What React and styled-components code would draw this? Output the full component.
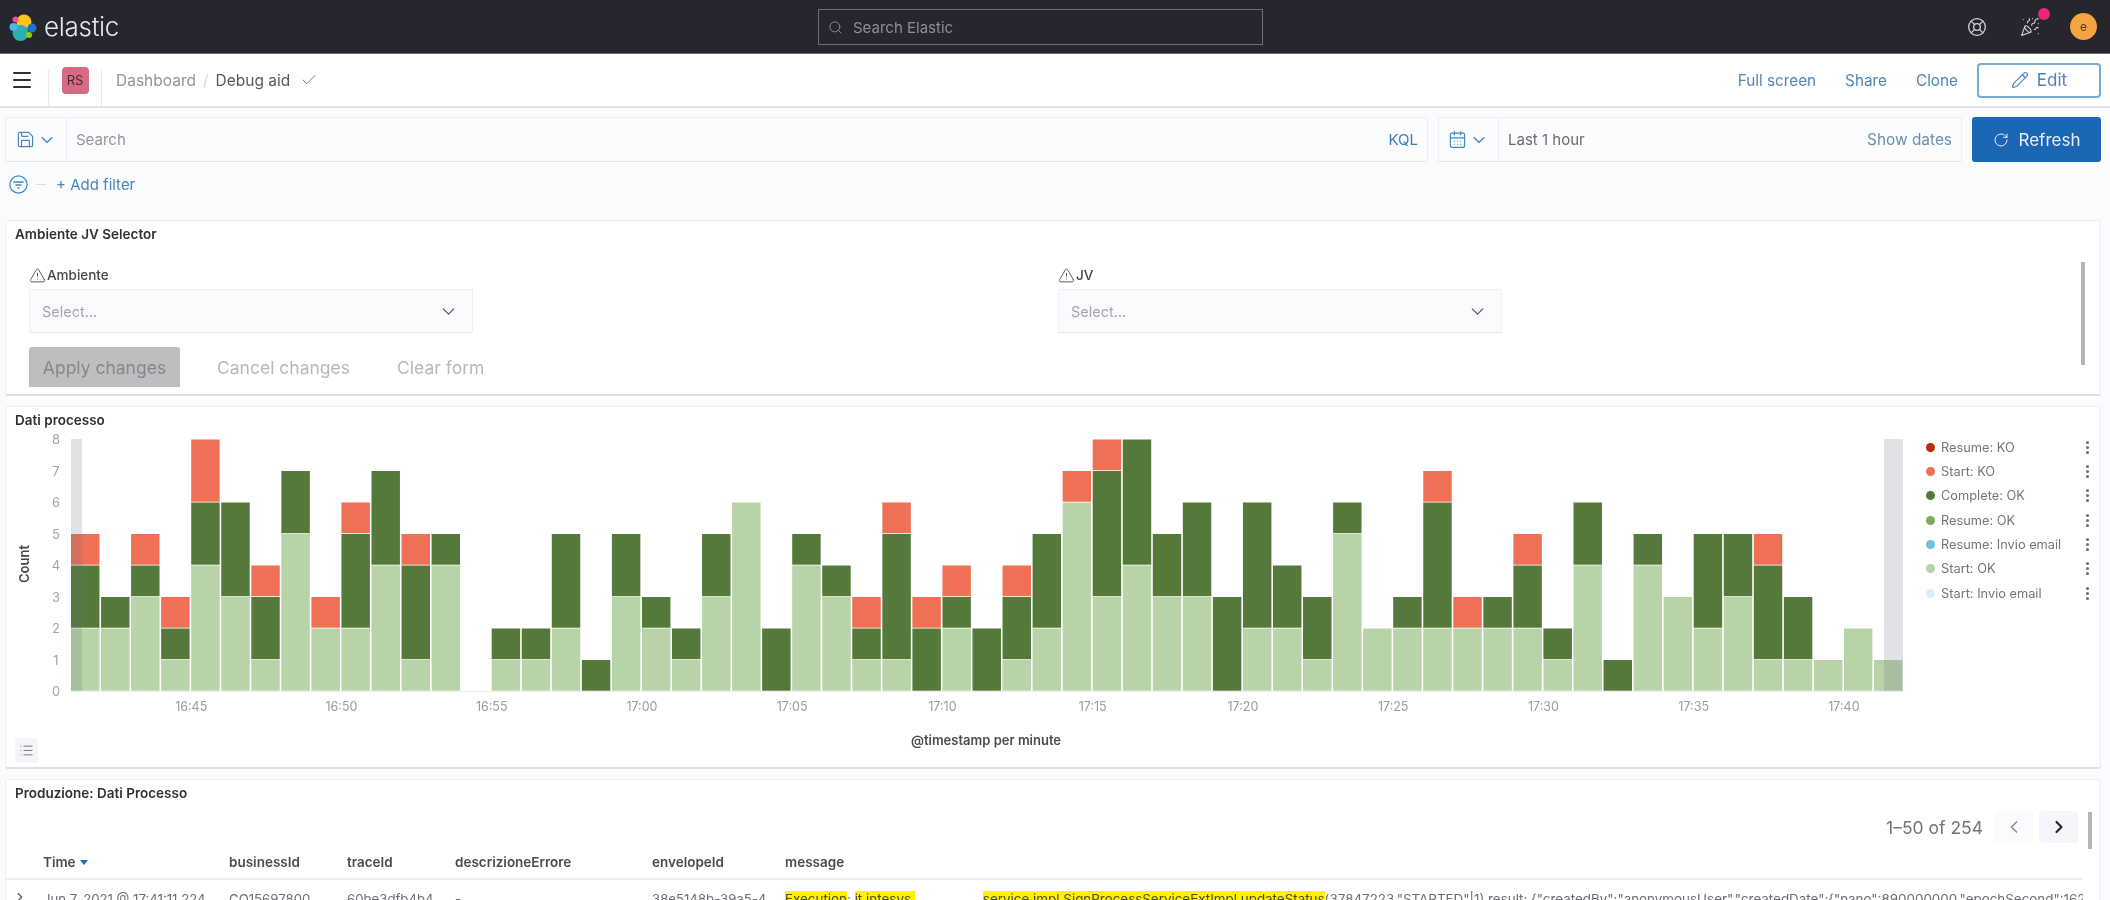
import React from 'react';
import styled, { createGlobalStyle } from 'styled-components';
import {
    Search, Menu, Check, Pencil, RotateCw, Save, CalendarDays, ChevronDown, ChevronLeft,
    ChevronRight, LifeBuoy, PartyPopper, TriangleAlert, List, EllipsisVertical
} from 'lucide-react';

const GlobalStyle = createGlobalStyle`
    html, body {
        margin: 0;
        padding: 0;
        background: #fafbfd;
    }

    * {
        box-sizing: border-box;
    }

    body {
        font-family: Inter, "Liberation Sans", sans-serif;
        color: #343741;
    }
`;

const Page = styled.div`
    width: 2110px;
    height: 900px;
    overflow: hidden;
    background: #fafbfd;
    filter: blur(0.6px);
`;

const TopBar = styled.header`
    height: 54px;
    background: #25262e;
    border-bottom: 1px solid #6b6c72;
    display: flex;
    align-items: center;
    position: relative;
    padding-left: 9px;
`;

const LogoText = styled.span`
    font-size: 26px;
    font-weight: 300;
    color: #e6e7ea;
    margin-left: 7px;
    margin-top: -1px;
    letter-spacing: -0.3px;
`;

const GlobalSearch = styled.div`
    position: absolute;
    left: 818px;
    top: 9px;
    width: 445px;
    height: 36px;
    border: 1px solid #6d6e74;
    display: flex;
    align-items: center;
    gap: 10px;
    padding-left: 9px;
    font-size: 15px;
    color: #8e8f95;
    background: #25262e;
`;

const TopIcons = styled.div`
    margin-left: auto;
    display: flex;
    align-items: center;
    padding-right: 13px;
    color: #cfd0d4;
`;

const IconSlot = styled.span`
    position: relative;
    display: flex;
    margin-right: ${props => props.gap}px;
`;

const Dot = styled.span`
    position: absolute;
    right: -10px;
    top: -9px;
    width: 12px;
    height: 12px;
    border-radius: 50%;
    background: #e8277b;
`;

const Avatar = styled.span`
    width: 27px;
    height: 27px;
    border-radius: 50%;
    background: #f5a442;
    color: #4f3c20;
    font-size: 12px;
    display: flex;
    align-items: center;
    justify-content: center;
`;

const SubNav = styled.nav`
    height: 54px;
    background: #fff;
    border-bottom: 2px solid #dfe2eb;
    display: flex;
    align-items: stretch;
    font-size: 16px;
`;

const NavCell = styled.div`
    width: ${props => props.width}px;
    display: flex;
    align-items: center;
    justify-content: center;
    padding-right: ${props => props.inset || 0}px;
    border-right: 1px solid #e6e8ee;
    margin-top: 16px;
    & > * {
        margin-top: -16px;
    }
`;

const SpaceBadge = styled.span`
    width: 27px;
    height: 27px;
    border-radius: 4px;
    background: #d56c84;
    color: #4a2a33;
    font-size: 13px;
    display: flex;
    align-items: center;
    justify-content: center;
`;

const Crumbs = styled.div`
    display: flex;
    align-items: center;
    padding-left: 14px;
    color: #909399;
    font-size: 15.5px;
`;

const CrumbSep = styled.span`
    margin: 0 7px;
    color: #d5d7dc;
`;

const CrumbCurrent = styled.span`
    color: #55585f;
    margin-right: 10px;
`;

const NavActions = styled.div`
    margin-left: auto;
    display: flex;
    align-items: center;
    gap: 29px;
    padding-right: 9px;
    color: #4c86b8;
    font-size: 15.3px;
`;

const EditButton = styled.span`
    width: 124px;
    height: 35px;
    margin-left: -10px;
    border: 2px solid #7aa9cf;
    border-radius: 4px;
    display: flex;
    align-items: center;
    justify-content: center;
    gap: 8px;
    font-size: 17px;
    color: #4c86b8;
    background: #fff;
`;

const QueryRow = styled.div`
    display: flex;
    margin: 9px 9px 0 5px;
    height: 45px;
    gap: 10px;
`;

const InputBox = styled.div`
    width: ${props => props.width}px;
    display: flex;
    align-items: stretch;
    background: #fbfcfe;
    border: 1px solid #eceef4;
    border-bottom-color: #e2e5ed;
    border-radius: 2px;
    font-size: 15px;
`;

const Prepend = styled.div`
    width: ${props => props.width}px;
    display: flex;
    align-items: center;
    justify-content: center;
    gap: 2px;
    color: #4388bf;
    border-right: 1px solid #eceef4;
`;

const InputText = styled.div`
    flex: 1;
    display: flex;
    align-items: center;
    justify-content: space-between;
    padding: 0 9px;
    color: ${props => props.dark ? '#6a6b70' : '#93969c'};
`;

const InputLink = styled.span`
    color: ${props => props.muted ? '#6f8fae' : '#3d80b8'};
    font-size: ${props => props.muted ? 15.4 : 15}px;
`;

const RefreshButton = styled.div`
    flex: 1;
    background: #1b67b6;
    border-radius: 3px;
    color: #e6eef7;
    font-size: 17px;
    display: flex;
    align-items: center;
    justify-content: center;
    gap: 10px;
`;

const FilterRow = styled.div`
    height: 44px;
    display: flex;
    align-items: center;
    padding-left: 9px;
    color: #4c86b8;
    font-size: 15px;
`;

const FilterDash = styled.span`
    width: 10px;
    height: 1px;
    background: #d9dbe0;
    margin: 0 10px 0 8px;
`;

const Panels = styled.main`
    margin: 14px 9px 0 5px;
    display: flex;
    flex-direction: column;
    gap: 10px;
`;

const Panel = styled.section`
    position: relative;
    height: ${props => props.height}px;
    background: #fff;
    border: 1px solid #eceef5;
    border-bottom: 2px solid #dcdfe9;
    border-radius: 3px;
`;

const PanelTitle = styled.h3`
    margin: 0;
    padding: 3px 0 0 9px;
    font-size: 13.5px;
    line-height: 20px;
    font-weight: 600;
    color: #2f3139;
`;

const ControlsGrid = styled.div`
    display: grid;
    grid-template-columns: 1029px 444px;
    margin: 20px 0 0 23px;
`;

const ControlLabel = styled.label`
    display: flex;
    align-items: center;
    gap: 1px;
    height: 22px;
    font-size: 13.5px;
    font-weight: 500;
    color: #45474e;
`;

const SelectBox = styled.div`
    width: 444px;
    height: 44px;
    margin-top: 3px;
    background: #fbfbfe;
    border: 1px solid #eef0f5;
    border-bottom-color: #e3e5ed;
    border-radius: 2px;
    padding: 0 13px 0 12px;
    display: flex;
    align-items: center;
    justify-content: space-between;
    font-size: 14.5px;
    color: #a3a5aa;
`;

const FormActions = styled.div`
    display: flex;
    align-items: center;
    margin: 14px 0 0 23px;
    font-size: 17.5px;
    color: #b7b8bc;
`;

const ApplyButton = styled.span`
    width: 151px;
    height: 40px;
    background: #bebec0;
    color: #86878b;
    border-radius: 3px 3px 0 0;
    display: flex;
    align-items: center;
    justify-content: center;
    margin-right: 37px;
`;

const GhostAction = styled.span`
    margin-right: 47px;
`;

const ScrollThumb = styled.span`
    position: absolute;
    right: ${props => props.right}px;
    top: ${props => props.top}px;
    width: 4px;
    height: ${props => props.height}px;
    background: #b4b5bb;
`;

const ChartRow = styled.div`
    display: flex;
    height: 326px;
    margin-top: 3px;
`;

const ChartSvg = styled.svg`
    width: 1914px;
    height: 326px;
    flex: none;
    font-family: Inter, "Liberation Sans", sans-serif;
`;

const Legend = styled.ul`
    list-style: none;
    margin: 2px 0 0;
    padding: 0 4px 0 6px;
    flex: 1;
    font-size: 12.8px;
`;

const LegendItem = styled.li`
    height: 24.35px;
    display: flex;
    align-items: center;
    gap: 6px;
    color: #73757b;

    & > svg {
        margin-left: auto;
        color: #6f7177;
    }
`;

const LegendDot = styled.span`
    width: 9px;
    height: 9px;
    border-radius: 50%;
    background: ${props => props.color};
    flex: none;
`;

const LegendToggle = styled.span`
    position: absolute;
    left: 9px;
    bottom: 4px;
    width: 23px;
    height: 25px;
    border-radius: 3px;
    background: #f3f5f9;
    color: #70737a;
    display: flex;
    align-items: center;
    justify-content: center;
`;

const Pager = styled.div`
    display: flex;
    align-items: center;
    justify-content: flex-end;
    height: 32px;
    margin: 8px 22px 0 0;
    font-size: 17.5px;
    color: #72757b;
`;

const PagerButton = styled.span`
    width: 39px;
    height: 32px;
    margin-left: ${props => props.first ? 11 : 6}px;
    border-radius: 3px;
    background: ${props => props.active ? '#f4f6fb' : '#fafbfd'};
    color: ${props => props.active ? '#25272e' : '#8b8e94'};
    display: flex;
    align-items: center;
    justify-content: center;
`;

const columns = '37px 186px 118px 108px 197px 133px 1fr';

const TableHead = styled.div`
    display: grid;
    grid-template-columns: ${columns};
    align-items: center;
    height: 37px;
    padding-top: 2px;
    margin: 0 17px 0 0;
    border-bottom: 2px solid #eceef4;
    font-size: 13.5px;
    font-weight: 600;
    color: #4a4c53;
`;

const SortCaret = styled.span`
    display: inline-block;
    margin-left: 4px;
    width: 0;
    height: 0;
    border: 4px solid transparent;
    border-top: 5px solid #1f6fb3;
    border-bottom: 0;
    vertical-align: middle;
`;

const TableRow = styled.div`
    display: grid;
    grid-template-columns: ${columns};
    height: 32px;
    margin-right: 17px;
    padding-top: 10px;
    font-size: 13.2px;
    line-height: 18px;
    color: #6b6d73;
    white-space: nowrap;
    overflow: hidden;
`;

const RowToggle = styled.span`
    padding-left: 7px;
    color: #50535a;
`;

const MessageCell = styled.div`
    overflow: hidden;
    white-space: nowrap;
    font-size: 13.4px;
`;

const Mark = styled.mark`
    background: #fff200;
    color: #4d4a1a;
`;

const Redacted = styled.span`
    display: inline-block;
    width: 68px;
    height: 18px;
    background: #fff;
    vertical-align: top;
`;

const ElasticLogo = () => (
    <svg width="28" height="30" viewBox="0 0 28 30">
        <circle cx="15" cy="10" r="7.5" fill="#fec514" />
        <circle cx="11.5" cy="21" r="8" fill="#2dafb1" />
        <circle cx="6.5" cy="7.5" r="3" fill="#f04e98" />
        <circle cx="4.5" cy="15" r="4" fill="#4fb7e8" />
        <circle cx="23" cy="16" r="4.5" fill="#1c73c9" />
        <circle cx="20" cy="23" r="3" fill="#93c90e" />
    </svg>
);

const FilterIcon = () => (
    <svg width="19" height="19" viewBox="0 0 19 19" fill="none" stroke="#4388bf" strokeWidth="1.3">
        <circle cx="9.5" cy="9.5" r="8.6" />
        <path d="M4.5 7h10M6.5 10h6M8.5 13h2" />
    </svg>
);

// light / dark / red counts of each minute bucket
const buckets = [
    [2, 2, 1], [2, 1, 0], [3, 1, 1], [1, 1, 1], [4, 2, 2], [3, 3, 0], [1, 2, 1], [5, 2, 0],
    [2, 0, 1], [2, 3, 1], [4, 3, 0], [1, 3, 1], [4, 1, 0], [0, 0, 0], [1, 1, 0], [1, 1, 0],
    [2, 3, 0], [0, 1, 0], [3, 2, 0], [2, 1, 0], [1, 1, 0], [3, 2, 0], [6, 0, 0], [0, 2, 0],
    [4, 1, 0], [3, 1, 0], [1, 1, 1], [1, 4, 1], [0, 2, 1], [2, 1, 1], [0, 2, 0], [1, 2, 1],
    [2, 3, 0], [6, 0, 1], [3, 4, 1], [4, 4, 0], [3, 2, 0], [3, 3, 0], [0, 3, 0], [2, 4, 0],
    [2, 2, 0], [1, 2, 0], [5, 1, 0], [2, 0, 0], [2, 1, 0], [2, 4, 1], [2, 0, 1], [2, 1, 0],
    [2, 2, 1], [1, 1, 0], [4, 2, 0], [0, 1, 0], [4, 1, 0], [3, 0, 0], [2, 3, 0], [3, 2, 0],
    [1, 3, 1], [1, 2, 0], [1, 0, 0], [2, 0, 0], [1, 0, 0]
];

const SEGMENT_COLORS = ['#b8d3a7', '#54793b', '#ee7055'];
const tickLabels = ['16:45', '16:50', '16:55', '17:00', '17:05', '17:10', '17:15', '17:20', '17:25', '17:30', '17:35', '17:40'];

const CHART_LEFT = 65;
const CHART_BOTTOM = 258;
const PITCH = 30.05;
const UNIT = 31.5;

const Chart = () => (
    <ChartSvg viewBox="0 0 1914 326">
        {buckets.map((bucket, i) => {
            let offset = 0;
            return bucket.map((count, s) => {
                if (!count) return null;
                const y = CHART_BOTTOM - (offset + count) * UNIT;
                offset += count;
                return (
                    <rect
                        key={`${i}-${s}`}
                        x={CHART_LEFT + i * PITCH}
                        y={y + 0.5}
                        width={PITCH - 1.6}
                        height={count * UNIT - 0.8}
                        fill={SEGMENT_COLORS[s]}
                    />
                );
            });
        })}
        <rect x={CHART_LEFT} y={6} width={11} height={252} fill="rgba(105,112,125,0.2)" />
        <rect x={1878} y={6} width={19} height={252} fill="rgba(105,112,125,0.2)" />
        <path d={`M${CHART_LEFT} 258.5H1897`} stroke="#edeef2" strokeWidth="1" />
        {[0, 1, 2, 3, 4, 5, 6, 7, 8].map(n => (
            <text key={n} x={50} y={CHART_BOTTOM - n * UNIT + 5} fontSize="13" fill="#a2a4a9" textAnchor="middle">{n}</text>
        ))}
        {tickLabels.map((label, i) => (
            <text key={label} x={CHART_LEFT + (4 + i * 5) * PITCH} y={278} fontSize="12.5" fill="#9a9ca1" textAnchor="middle">{label}</text>
        ))}
        <text transform="translate(23 131) rotate(-90)" fontSize="13" fontWeight="600" fill="#43454c" textAnchor="middle">Count</text>
        <text x={980} y={312} fontSize="13" fontWeight="600" fill="#4a4c53" textAnchor="middle">@timestamp per minute</text>
    </ChartSvg>
);

const legendItems = [
    { label: 'Resume: KO', color: '#bd2a0a' },
    { label: 'Start: KO', color: '#ee7055' },
    { label: 'Complete: OK', color: '#54793b' },
    { label: 'Resume: OK', color: '#7fa866' },
    { label: 'Resume: Invio email', color: '#6dbfe3' },
    { label: 'Start: OK', color: '#b8d3a7' },
    { label: 'Start: Invio email', color: '#d6f1fb' }
];

const FilterControl = ({ label }) => (
    <div>
        <ControlLabel>
            <TriangleAlert size={17} strokeWidth={1.2} color="#3f4147" />
            {label}
        </ControlLabel>
        <SelectBox>
            Select...
            <ChevronDown size={21} strokeWidth={1.4} color="#55585f" />
        </SelectBox>
    </div>
);

const App = () => (
    <Page>
        <GlobalStyle />
        <TopBar>
            <ElasticLogo />
            <LogoText>elastic</LogoText>
            <GlobalSearch>
                <Search size={15} strokeWidth={1.5} />
                Search Elastic
            </GlobalSearch>
            <TopIcons>
                <IconSlot gap={33}><LifeBuoy size={20} strokeWidth={1.6} /></IconSlot>
                <IconSlot gap={30}><PartyPopper size={20} strokeWidth={1.4} /><Dot /></IconSlot>
                <Avatar>e</Avatar>
            </TopIcons>
        </TopBar>
        <SubNav>
            <NavCell width={49} inset={4}><Menu size={24} color="#30323a" /></NavCell>
            <NavCell width={53}><SpaceBadge>RS</SpaceBadge></NavCell>
            <Crumbs>
                Dashboard
                <CrumbSep>/</CrumbSep>
                <CrumbCurrent>Debug aid</CrumbCurrent>
                <Check size={18} strokeWidth={1.2} color="#70737a" />
            </Crumbs>
            <NavActions>
                <span>Full screen</span>
                <span>Share</span>
                <span>Clone</span>
                <EditButton><Pencil size={18} strokeWidth={1.6} />Edit</EditButton>
            </NavActions>
        </SubNav>
        <QueryRow>
            <InputBox width={1423}>
                <Prepend width={61}>
                    <Save size={19} strokeWidth={1.5} />
                    <ChevronDown size={20} strokeWidth={1.5} />
                </Prepend>
                <InputText>Search<InputLink>KQL</InputLink></InputText>
            </InputBox>
            <InputBox width={524}>
                <Prepend width={60}>
                    <CalendarDays size={19} strokeWidth={1.5} />
                    <ChevronDown size={20} strokeWidth={1.5} />
                </Prepend>
                <InputText dark>Last 1 hour<InputLink muted>Show dates</InputLink></InputText>
            </InputBox>
            <RefreshButton><RotateCw size={16} strokeWidth={1.5} />Refresh</RefreshButton>
        </QueryRow>
        <FilterRow>
            <FilterIcon />
            <FilterDash />
            + Add filter
        </FilterRow>
        <Panels>
            <Panel height={176}>
                <PanelTitle>Ambiente JV Selector</PanelTitle>
                <ControlsGrid>
                    <FilterControl label="Ambiente" />
                    <FilterControl label="JV" />
                </ControlsGrid>
                <FormActions>
                    <ApplyButton>Apply changes</ApplyButton>
                    <GhostAction>Cancel changes</GhostAction>
                    <GhostAction>Clear form</GhostAction>
                </FormActions>
                <ScrollThumb right={15} top={41} height={103} />
            </Panel>
            <Panel height={363}>
                <PanelTitle>Dati processo</PanelTitle>
                <ChartRow>
                    <Chart />
                    <Legend>
                        {legendItems.map(item => (
                            <LegendItem key={item.label}>
                                <LegendDot color={item.color} />
                                {item.label}
                                <EllipsisVertical size={17} strokeWidth={2.4} />
                            </LegendItem>
                        ))}
                    </Legend>
                </ChartRow>
                <LegendToggle><List size={15} strokeWidth={1.5} /></LegendToggle>
            </Panel>
            <Panel height={160}>
                <PanelTitle>Produzione: Dati Processo</PanelTitle>
                <Pager>
                    1–50 of 254
                    <PagerButton first><ChevronLeft size={20} strokeWidth={2} /></PagerButton>
                    <PagerButton active><ChevronRight size={20} strokeWidth={2.6} /></PagerButton>
                </Pager>
                <TableHead>
                    <span />
                    <span>Time<SortCaret /></span>
                    <span>businessId</span>
                    <span>traceId</span>
                    <span>descrizioneErrore</span>
                    <span>envelopeId</span>
                    <span>message</span>
                </TableHead>
                <TableRow>
                    <RowToggle><ChevronRight size={14} /></RowToggle>
                    <span>Jun 7, 2021 @ 17:41:11.224</span>
                    <span>CO15697800</span>
                    <span>60be3dfb4b4</span>
                    <span>-</span>
                    <span>38e5148b-39a5-4</span>
                    <MessageCell>
                        <Mark>Execution</Mark>: <Mark>it.intesys.</Mark><Redacted /><Mark>service.impl.SignProcessServiceExtImpl.updateStatus</Mark>
                        {'(37847223,"STARTED"|1) result: {"createdBy":"anonymousUser","createdDate":{"nano":890000000,"epochSecond":16230'}
                    </MessageCell>
                </TableRow>
                <ScrollThumb right={8} top={32} height={37} />
            </Panel>
        </Panels>
    </Page>
);

export default App;
